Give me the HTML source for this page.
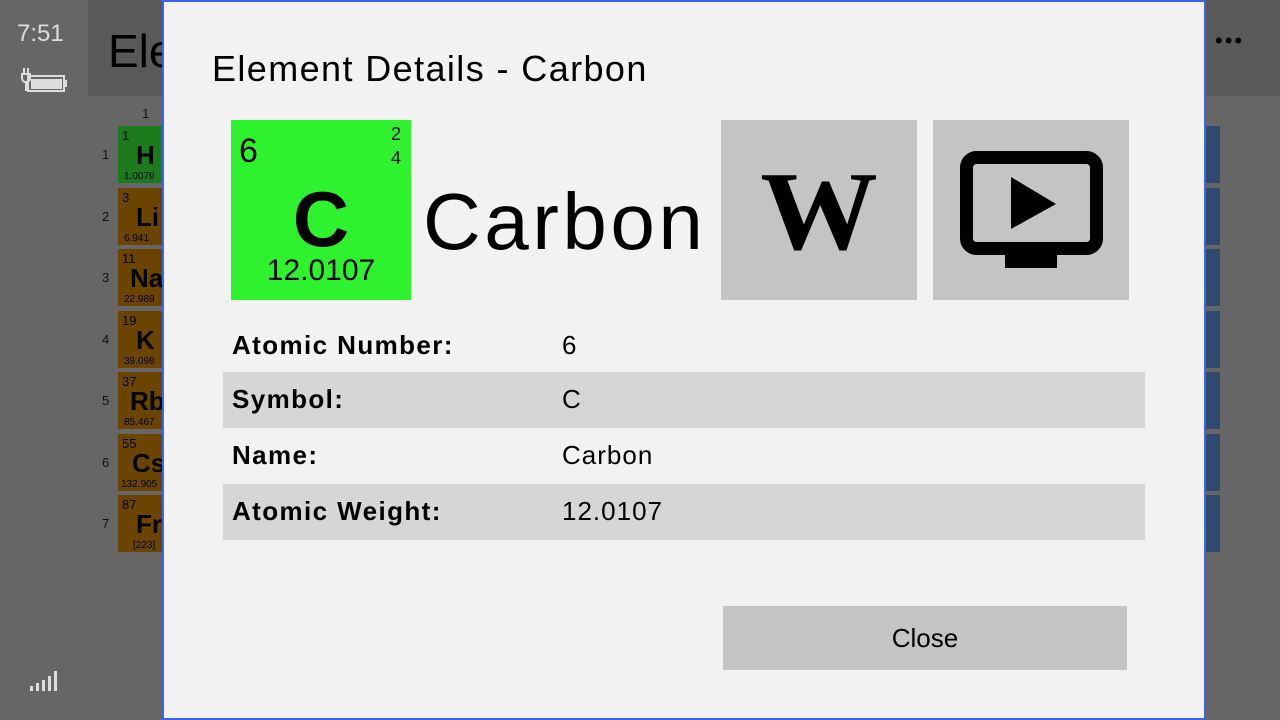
<!DOCTYPE html>
<html><head><meta charset="utf-8"><style>
*{margin:0;padding:0;box-sizing:border-box}
body{width:1280px;height:720px;background:#666;position:relative;overflow:hidden;font-family:"Liberation Sans","DejaVu Sans",sans-serif;color:#000}
.a{position:absolute}
.cell{position:absolute;left:118px;width:44px;height:57px;background:#6b4500}
.cell .n{position:absolute;left:4px;top:2px;font-size:13px}
.cell .s{position:absolute;left:18px;top:14px;font-size:26px;font-weight:bold}
.cell .w{position:absolute;left:6px;bottom:1px;font-size:10px}
.rn{position:absolute;left:102px;font-size:13px;color:#111}
.rc{position:absolute;left:1206px;width:14px;height:57px;background:#2f4a6e}
.row{position:absolute;left:223px;width:922px;height:56px;font-size:26px}
.row .k{position:absolute;left:9px;top:12px;font-weight:bold;letter-spacing:1.4px}
.row .v{position:absolute;left:339px;top:12px;letter-spacing:1px}
</style></head><body>
<div class="a" style="left:88px;top:0;width:1192px;height:96px;background:#595959"></div>
<div class="a" style="left:17px;top:20px;font-size:24px;color:#ddd">7:51</div>
<svg class="a" style="left:18px;top:66px" width="50" height="30"><path d="M6 2v6M10 2v6M4 8h8v4c0 3-2 4-4 4s-4-1-4-4zM8 16v9" stroke="#ddd" stroke-width="2" fill="none"/><rect x="10" y="10" width="36" height="15" fill="none" stroke="#ddd" stroke-width="2"/><rect x="13" y="13" width="31" height="10" fill="#ddd"/><rect x="46" y="14" width="3" height="7" fill="#ddd"/></svg>
<svg class="a" style="left:30px;top:670px" width="30" height="24"><rect x="0" y="16" width="3" height="5" fill="#ddd"/><rect x="6" y="13" width="3" height="8" fill="#ddd"/><rect x="12" y="10" width="3" height="11" fill="#ddd"/><rect x="18" y="6" width="3" height="15" fill="#ddd"/><rect x="24" y="1" width="3" height="20" fill="#ddd"/></svg>
<div class="a" style="left:108px;top:24px;font-size:46px;color:#000">Ele</div>
<div class="a" style="left:1215px;top:28px;font-size:22px;letter-spacing:2px">•••</div>
<div class="a" style="left:142px;top:106px;font-size:13px;color:#111">1</div>
<div class="rn" style="top:147px">1</div><div class="rn" style="top:209px">2</div><div class="rn" style="top:270px">3</div><div class="rn" style="top:332px">4</div><div class="rn" style="top:393px">5</div><div class="rn" style="top:455px">6</div><div class="rn" style="top:516px">7</div>
<div class="cell" style="top:126px;background:#1d7a1d"><span class="n">1</span><span class="s">H</span><span class="w">1.0079</span></div>
<div class="cell" style="top:188px"><span class="n">3</span><span class="s">Li</span><span class="w">6.941</span></div>
<div class="cell" style="top:249px"><span class="n">11</span><span class="s" style="left:12px">Na</span><span class="w">22.989</span></div>
<div class="cell" style="top:311px"><span class="n">19</span><span class="s">K</span><span class="w">39.098</span></div>
<div class="cell" style="top:372px"><span class="n">37</span><span class="s" style="left:12px">Rb</span><span class="w">85.467</span></div>
<div class="cell" style="top:434px"><span class="n">55</span><span class="s" style="left:14px">Cs</span><span class="w" style="left:3px">132.905</span></div>
<div class="cell" style="top:495px"><span class="n">87</span><span class="s">Fr</span><span class="w" style="left:15px">[223]</span></div>
<div class="rc" style="top:126px"></div><div class="rc" style="top:188px"></div><div class="rc" style="top:249px"></div><div class="rc" style="top:311px"></div><div class="rc" style="top:372px"></div><div class="rc" style="top:434px"></div><div class="rc" style="top:495px"></div>

<div class="a" style="left:162px;top:0;width:1044px;height:720px;background:#f2f2f2;border:2px solid #3f62f0"></div>
<div class="a" style="left:212px;top:48px;font-size:36px;letter-spacing:1.4px">Element Details - Carbon</div>
<div class="a" style="left:231px;top:120px;width:180px;height:180px;background:#2ff22f">
 <div class="a" style="left:8px;top:12px;font-size:34px">6</div>
 <div class="a" style="left:160px;top:2px;font-size:18px;line-height:24px">2<br>4</div>
 <div class="a" style="left:0;width:180px;top:54px;text-align:center;font-size:78px;font-weight:bold">C</div>
 <div class="a" style="left:0;width:180px;top:134px;text-align:center;font-size:30px">12.0107</div>
</div>
<div class="a" style="left:423px;top:172px;font-size:80px;line-height:100px;letter-spacing:3.5px">Carbon</div>
<div class="a" style="left:721px;top:120px;width:196px;height:180px;background:#c4c4c4">
 <div class="a" style="left:0;width:196px;top:32px;text-align:center;font-family:'Liberation Serif',serif;font-weight:bold;font-size:112px;line-height:120px;transform:scaleX(1.05)">W</div>
</div>
<div class="a" style="left:933px;top:120px;width:196px;height:180px;background:#c4c4c4"></div>
<svg class="a" style="left:933px;top:120px" width="196" height="180">
 <rect x="33.5" y="37.5" width="130" height="91" rx="10" fill="none" stroke="#000" stroke-width="13"/>
 <rect x="72" y="134" width="52" height="14" fill="#000"/>
 <path d="M78 57L123 84L78 109Z" fill="#000"/>
</svg>
<div class="row" style="top:318px"><span class="k">Atomic Number:</span><span class="v">6</span></div>
<div class="row" style="top:372px;background:#d6d6d6"><span class="k">Symbol:</span><span class="v">C</span></div>
<div class="row" style="top:428px"><span class="k">Name:</span><span class="v">Carbon</span></div>
<div class="row" style="top:484px;background:#d6d6d6"><span class="k">Atomic Weight:</span><span class="v">12.0107</span></div>
<div class="a" style="left:723px;top:606px;width:404px;height:64px;background:#c4c4c4;text-align:center;font-size:26px;line-height:64px">Close</div>
</body></html>
